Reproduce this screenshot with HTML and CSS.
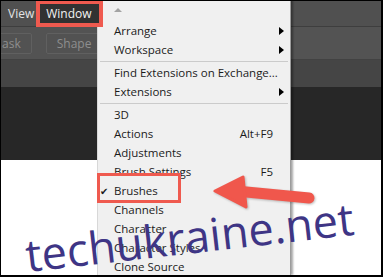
FILE: index.html
```html
<!DOCTYPE html>
<html lang="en">
<head>
    <meta charset="UTF-8">
    <title>Window Menu</title>
    <link rel="stylesheet" href="styles.css">
</head>
<body>

<div class="frame">
    <div class="menubar">
        <span class="menubar-item">View</span>
        <span class="menubar-item active">Window</span>
    </div>

    <div class="toolbar">
        <button class="tool-btn tool-cut">ask</button>
        <button class="tool-btn">Shape</button>
        <span class="tool-sep"></span>
    </div>

    <div class="options-bar"></div>
    <div class="workspace"></div>
    <div class="canvas"></div>

    <div class="menu">
        <div class="menu-scroll"><span class="scroll-up"></span></div>
        <div class="menu-item"><span></span><span>Arrange</span><span></span><span class="sub"></span></div>
        <div class="menu-item"><span></span><span>Workspace</span><span></span><span class="sub"></span></div>
        <div class="menu-sep"></div>
        <div class="menu-item"><span></span><span>Find Extensions on Exchange...</span><span></span><span></span></div>
        <div class="menu-item"><span></span><span>Extensions</span><span></span><span class="sub"></span></div>
        <div class="menu-sep"></div>
        <div class="menu-item"><span></span><span>3D</span><span></span><span></span></div>
        <div class="menu-item"><span></span><span>Actions</span><span class="key">Alt+F9</span><span></span></div>
        <div class="menu-item"><span></span><span>Adjustments</span><span></span><span></span></div>
        <div class="menu-item"><span></span><span>Brush Settings</span><span class="key">F5</span><span></span></div>
        <div class="menu-item marked"><span class="check">&#10004;</span><span>Brushes</span><span></span><span></span></div>
        <div class="menu-item"><span></span><span>Channels</span><span></span><span></span></div>
        <div class="menu-item"><span></span><span>Character</span><span></span><span></span></div>
        <div class="menu-item"><span></span><span>Character Styles</span><span></span><span></span></div>
        <div class="menu-item"><span></span><span>Clone Source</span><span></span><span></span></div>
    </div>

    <svg class="arrow" width="383" height="277" viewBox="0 0 383 277">
        <line x1="236" y1="191" x2="309" y2="198" stroke="#f0574c" stroke-width="11" stroke-linecap="round"/>
        <polygon points="215,191 243,177 246,207" fill="#f0574c" stroke="#f0574c" stroke-width="3" stroke-linejoin="round"/>
    </svg>

    <div class="watermark">techukraine.net</div>
</div>

</body>
</html>
```

FILE: styles.css
```css
body {
    margin: 0;
    font-family: 'Open Sans', sans-serif;
}

.frame {
    position: relative;
    width: 383px;
    height: 277px;
    box-sizing: border-box;
    border: 1px solid #000;
    border-width: 1px 2px 2px 1px;
    display: flex;
    flex-direction: column;
    overflow: hidden;
    background: #fff;
}

.menubar {
    height: 25px;
    flex: none;
    display: flex;
    align-items: flex-start;
    gap: 2px;
    padding-left: 7px;
    background: #505050;
    border-bottom: 1px solid #3e3e3e;
}

.menubar-item {
    font-size: 12px;
    color: #e4e4e4;
    line-height: 25px;
}

.menubar-item.active {
    position: relative;
    z-index: 3;
    margin-top: -1px;
    height: 19px;
    line-height: 19px;
    padding: 0 7px 0 6px;
    background: #323232;
    border: 4px solid #ef5a4f;
    color: #f2f2f2;
}

.toolbar {
    height: 33px;
    flex: none;
    display: flex;
    align-items: flex-start;
    padding-top: 6px;
    box-sizing: border-box;
    background: #535353;
    border-bottom: 1px solid #424242;
}

.tool-btn {
    height: 21px;
    padding: 0 10px;
    margin-right: 14px;
    background: #525252;
    border: 1px solid #606060;
    border-radius: 2px;
    color: #8e8e8e;
    font-family: 'Open Sans', sans-serif;
    font-size: 12px;
}

.tool-cut {
    margin-left: -14px;
    padding-left: 14px;
}

.tool-btn + .tool-btn {
    margin-right: 0;
    width: 53px;
}

.tool-sep {
    width: 1px;
    height: 21px;
    margin-left: 2px;
    background: #3a3a3a;
}

.options-bar {
    height: 27px;
    flex: none;
    background: #454545;
}

.workspace {
    height: 73px;
    flex: none;
    background: #272727;
}

.canvas {
    flex: 1;
    background: #fff;
}

.menu {
    position: absolute;
    z-index: 2;
    left: 96px;
    top: -1px;
    bottom: 0;
    width: 192px;
    background: #f0f0f0;
    border-left: 1px solid #d8d8d8;
    border-right: 1px solid #9c9c9c;
    box-shadow: 2px 0 2px rgba(0, 0, 0, 0.35);
    font-size: 11.5px;
    color: #1b1b1b;
}

.menu-scroll {
    height: 21px;
    padding-left: 16px;
    display: flex;
    align-items: center;
}

.scroll-up {
    width: 0;
    height: 0;
    border-left: 4px solid transparent;
    border-right: 4px solid transparent;
    border-bottom: 4px solid #a3a3a3;
    margin-top: -1px;
}

.menu-item {
    position: relative;
    height: 19px;
    display: grid;
    grid-template-columns: 16px 1fr auto 11px;
    align-items: center;
    padding-right: 6px;
    white-space: nowrap;
}

.check {
    padding-left: 2px;
    font-size: 10px;
}

.key {
    text-align: right;
}

.sub {
    justify-self: end;
    width: 0;
    height: 0;
    border-top: 4px solid transparent;
    border-bottom: 4px solid transparent;
    border-left: 5px solid #000;
}

.menu-sep {
    height: 4px;
    position: relative;
}

.menu-sep::before {
    content: "";
    position: absolute;
    left: 2px;
    right: 2px;
    top: 2px;
    height: 1px;
    background: #cbcbcb;
}

.menu-item.marked::after {
    content: "";
    position: absolute;
    left: -1px;
    top: -8px;
    width: 78px;
    height: 24px;
    border: 3px solid #ef5a4f;
}

.arrow {
    position: absolute;
    z-index: 4;
    left: -1px;
    top: -1px;
    filter: drop-shadow(1px 1px 1px rgba(0, 0, 0, 0.25));
}

.watermark {
    position: absolute;
    z-index: 5;
    left: 27px;
    top: 231px;
    font-size: 45px;
    color: #3e3585;
    white-space: nowrap;
    transform: rotate(-6.5deg);
    transform-origin: left bottom;
    line-height: 1;
}
```
